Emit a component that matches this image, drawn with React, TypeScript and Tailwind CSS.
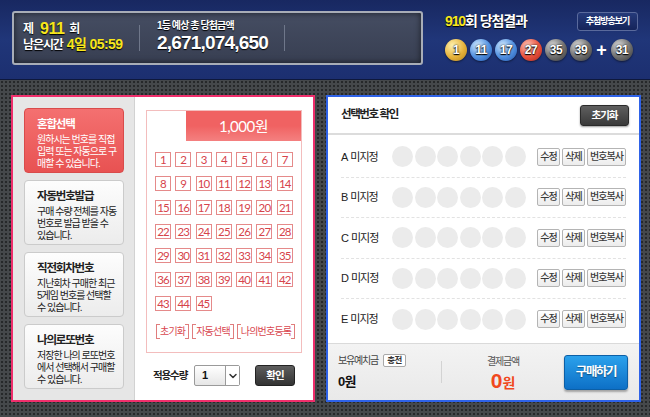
import React from 'react';
import { ChevronDown } from 'lucide-react';

interface Menu {
  title: string;
  lines: string[];
  active?: boolean;
}

const MENUS: Menu[] = [
  { title: '혼합선택', lines: ['원하시는 번호를 직접', '입력 또는 자동으로 구', '매할 수 있습니다.'], active: true },
  { title: '자동번호발급', lines: ['구매 수량 전체를 자동', '번호로 발급 받을 수', '있습니다.'] },
  { title: '직전회차번호', lines: ['지난회차 구매한 최근', '5게임 번호를 선택할', '수 있습니다.'] },
  { title: '나의로또번호', lines: ['저장한 나의 로또번호', '에서 선택해서 구매할', '수 있습니다.'] },
];

const NUMBERS = Array.from({ length: 45 }, (_, i) => i + 1);
const SLOTS = ['A', 'B', 'C', 'D', 'E'];

// winning balls of the last draw
const BALLS = [
  { n: 1, cls: 'bg-[radial-gradient(circle_at_35%_30%,#fff2b0,#e6b23a_55%,#b3821a)]' },
  { n: 11, cls: 'bg-[radial-gradient(circle_at_35%_30%,#cfe8ff,#4f8fe0_55%,#2456a8)]' },
  { n: 17, cls: 'bg-[radial-gradient(circle_at_35%_30%,#cfe8ff,#4f8fe0_55%,#2456a8)]' },
  { n: 27, cls: 'bg-[radial-gradient(circle_at_35%_30%,#ffc2b5,#e8503c_55%,#a8261a)]' },
  { n: 35, cls: 'bg-[radial-gradient(circle_at_35%_30%,#d8d8d8,#6e6e6e_55%,#333)]' },
  { n: 39, cls: 'bg-[radial-gradient(circle_at_35%_30%,#d8d8d8,#6e6e6e_55%,#333)]' },
];
const BONUS = { n: 31, cls: 'bg-[radial-gradient(circle_at_35%_30%,#d8d8d8,#6e6e6e_55%,#333)]' };

const Ball = ({ n, cls }: { n: number; cls: string }) => (
  <div
    className={`w-[22px] h-[22px] rounded-full flex items-center justify-center text-white text-[12px] font-bold tracking-[-0.5px] [text-shadow:0_0_2px_#000,0_1px_1px_#000] shadow-[0_1px_2px_rgba(0,0,0,0.5)] ${cls}`}
  >
    {n}
  </div>
);

const SmallBtn = ({ label, w }: { label: string; w: string }) => (
  <button
    className={`${w} h-[18px] border border-[#b4b4b4] rounded-[2px] bg-gradient-to-b from-white to-[#ececec] text-[10px] text-[#3a3a3a] font-medium tracking-[-1px] leading-none flex items-center justify-center`}
  >
    {label}
  </button>
);

const BracketBtn = ({ label }: { label: string }) => (
  <span className="relative h-[15px] px-[3px] border border-[#e07d7d] text-[10px] text-[#d9474f] tracking-[-0.8px] leading-none flex items-center">
    {label}
    <span className="absolute left-[3px] right-[3px] top-[-1px] h-px bg-white" />
    <span className="absolute left-[3px] right-[3px] bottom-[-1px] h-px bg-white" />
  </span>
);

export default function App() {
  return (
    <div className="w-[650px] h-[417px] overflow-hidden bg-[#45484b] bg-[radial-gradient(circle,#26282a_0.9px,transparent_1.3px)] bg-[length:4px_4px] font-['Liberation_Sans','Noto_Sans_CJK_KR',sans-serif]">
      {/* Header */}
      <div className="h-[80px] flex pl-[12px] pt-[11px] bg-gradient-to-b from-[#182861] via-[#203679] to-[#1c2f70] border-b border-[#0e183c]">
        <div className="w-[411px] h-[54px] rounded-[3px] border-2 border-[#a8adb7] bg-gradient-to-b from-[#454d62] to-[#383f52] shadow-[inset_0_0_6px_rgba(0,0,0,0.6)] flex items-center pl-[9px] [text-shadow:0_1px_1px_#000]">
          <div className="w-[116px] flex flex-col mb-[3px]">
            <div className="h-[16px] flex items-center text-white font-bold">
              <span className="text-[12px]">제</span>
              <span className="text-[16px] text-[#f7e61c] ml-[6px] mr-[5px] tracking-[-0.5px]">911</span>
              <span className="text-[12px]">회</span>
            </div>
            <div className="h-[16px] flex items-center text-white font-bold whitespace-nowrap">
              <span className="text-[12px] tracking-[-1.1px]">남은시간</span>
              <span className="text-[14px] text-[#f7e61c] ml-[4px] tracking-[-0.6px]">4일 05:59</span>
            </div>
          </div>
          <div className="w-px h-[26px] bg-[#6f778a] mr-[17px]" />
          <div className="w-[127px] flex flex-col mb-[3px]">
            <div className="h-[14px] flex items-center text-white text-[10px] font-bold tracking-[-0.9px] whitespace-nowrap">
              1등 예상 총 당첨금액
            </div>
            <div className="h-[22px] flex items-center text-white text-[19px] font-bold tracking-[-0.8px]">
              2,671,074,650
            </div>
          </div>
          <div className="w-px h-[26px] bg-[#6f778a]" />
        </div>

        <div className="ml-[22px] w-[193px] flex flex-col">
          <div className="h-[19px] mt-[1px] flex items-center justify-between">
            <span className="text-[14px] font-bold text-white tracking-[-1.1px] whitespace-nowrap [text-shadow:0_1px_1px_#000]">
              <span className="text-[#f7e61c]">910</span>회 당첨결과
            </span>
            <button className="w-[61px] h-[19px] rounded-[3px] border border-[#5a6a9c] bg-gradient-to-b from-[#253a7a] to-[#15245a] text-white text-[9px] font-bold tracking-[-1px] leading-none">
              추첨방송보기
            </button>
          </div>
          <div className="mt-[8px] flex items-center gap-[3px]">
            {BALLS.map((b) => (
              <Ball key={b.n} n={b.n} cls={b.cls} />
            ))}
            <span className="w-[13px] text-center text-white text-[18px] font-bold leading-none">+</span>
            <Ball n={BONUS.n} cls={BONUS.cls} />
          </div>
        </div>
      </div>

      {/* Body */}
      <div className="flex pl-[11px] pt-[15px] gap-[11px]">
        {/* Left panel */}
        <div className="w-[304px] h-[307px] border-2 border-[#ef2e6c] bg-white flex">
          <div className="w-[122px] h-full bg-[#e6e6e6] border-r border-[#d2d2d2] pl-[11px] pt-[11px] flex flex-col gap-[7px]">
            {MENUS.map((m) => (
              <div
                key={m.title}
                className={
                  m.active
                    ? 'w-[100px] h-[65px] rounded-[4px] border border-[#d94b4b] bg-gradient-to-b from-[#f47070] to-[#e85252] pl-[12px] pt-[7px] text-white'
                    : 'w-[100px] h-[65px] rounded-[4px] border border-[#cbcbcb] bg-gradient-to-b from-[#fdfdfd] to-[#ececec] pl-[12px] pt-[7px] text-[#222]'
                }
              >
                <div className="h-[16px] text-[11.5px] font-bold tracking-[-1.2px] leading-[16px] whitespace-nowrap">{m.title}</div>
                <div className="mt-[2px]">
                  {m.lines.map((l) => (
                    <div key={l} className="h-[12px] text-[10px] leading-[12px] tracking-[-1px] whitespace-nowrap">
                      {l}
                    </div>
                  ))}
                </div>
              </div>
            ))}
          </div>

          <div className="flex-1 pl-[11px] pt-[13px]">
            <div className="w-[156px] h-[243px] border border-[#f3bdbd] flex flex-col">
              <div className="h-[30px] flex">
                <div className="w-[39px] bg-white" />
                <div className="flex-1 bg-gradient-to-b from-[#f06262] via-[#f06262] to-[#f48080] flex items-center justify-center text-white text-[15px] font-['Lato','Noto_Sans_CJK_KR',sans-serif] tracking-[-0.5px]">
                  1,000원
                </div>
              </div>
              <div className="pl-[8px] pt-[11px] grid grid-cols-[repeat(7,16px)] gap-x-[4.3px] gap-y-[9px]">
                {NUMBERS.map((n) => (
                  <div
                    key={n}
                    className="w-[16px] h-[15px] border border-[#e58a8a] flex items-center justify-center text-[11.5px] text-[#d6434b] tracking-[-0.8px] font-['Lato',sans-serif] leading-none"
                  >
                    {n}
                  </div>
                ))}
              </div>
              <div className="mt-[13px] pl-[9px] flex gap-[3px]">
                <BracketBtn label="초기화" />
                <BracketBtn label="자동선택" />
                <BracketBtn label="나의번호등록" />
              </div>
            </div>

            <div className="mt-[12px] flex items-center">
              <span className="w-[48px] pl-[7px] text-[10.5px] text-[#222] font-bold tracking-[-1.1px] whitespace-nowrap">적용수량</span>
              <div className="w-[46px] h-[21px] border border-[#9a9a9a] rounded-[2px] bg-gradient-to-b from-white to-[#e6e6e6] flex">
                <span className="flex-1 pl-[7px] flex items-center text-[11px] font-bold text-[#111]">1</span>
                <span className="w-[14px] border-l border-[#9a9a9a] bg-white flex items-center justify-center">
                  <ChevronDown size={12} strokeWidth={3} className="text-[#333]" />
                </span>
              </div>
              <button className="ml-[15px] w-[40px] h-[21px] rounded-[3px] border border-[#222] bg-gradient-to-b from-[#5e5e5e] to-[#333] text-white text-[10.5px] font-bold tracking-[-1px] leading-none">
                확인
              </button>
            </div>
          </div>
        </div>

        {/* Right panel */}
        <div className="w-[315px] h-[307px] border-2 border-[#2e62e8] bg-white flex flex-col">
          <div className="h-[38px] flex items-center justify-between pl-[13px] pr-[10px] border-b-2 border-[#dcdcdc]">
            <span className="text-[11.5px] font-bold text-[#222] tracking-[-1.4px]">선택번호 확인</span>
            <button className="w-[49px] h-[21px] rounded-[3px] border border-[#2a2a2a] bg-gradient-to-b from-[#5f5f5f] to-[#3a3a3a] shadow-[0_1px_2px_rgba(0,0,0,0.4)] text-white text-[10.5px] font-bold tracking-[-1px] leading-none">
              초기화
            </button>
          </div>

          <div className="pt-[2px] px-[13px] flex flex-col">
            {SLOTS.map((s, i) => (
              <div
                key={s}
                className={
                  i < SLOTS.length - 1
                    ? 'h-[40.5px] flex items-center border-b border-dashed border-[#e2e2e2]'
                    : 'h-[40.5px] flex items-center'
                }
              >
                <span className="w-[51px] flex items-center text-[11px] text-[#222] whitespace-nowrap">
                  <span>{s}</span>
                  <span className="ml-[2px] tracking-[-1px]">미지정</span>
                </span>
                <div className="flex gap-[1.6px]">
                  {[0, 1, 2, 3, 4, 5].map((k) => (
                    <div key={k} className="w-[21px] h-[21px] rounded-full bg-[#ebebeb]" />
                  ))}
                </div>
                <div className="ml-auto flex gap-[2px]">
                  <SmallBtn label="수정" w="w-[23px]" />
                  <SmallBtn label="삭제" w="w-[23px]" />
                  <SmallBtn label="번호복사" w="w-[39px]" />
                </div>
              </div>
            ))}
          </div>

          <div className="mt-auto h-[57px] border-t border-[#dadada] bg-gradient-to-b from-[#f3f3f3] to-[#e9e9e9] flex items-center pl-[10px] pr-[11px]">
            <div className="w-[103px] flex flex-col gap-[4px]">
              <div className="flex items-center gap-[5px]">
                <span className="text-[10px] text-[#444] tracking-[-1.2px] whitespace-nowrap">보유예치금</span>
                <span className="w-[23px] h-[13px] border border-[#a8a8a8] rounded-[2px] bg-white text-[8.5px] font-bold text-[#333] flex items-center justify-center leading-none tracking-[-0.5px]">
                  충전
                </span>
              </div>
              <span className="text-[13px] font-bold text-[#111] tracking-[-0.8px]">0원</span>
            </div>
            <div className="w-px h-[22px] bg-[#d3d3d3]" />
            <div className="flex-1 flex flex-col items-center gap-[1px]">
              <span className="text-[10px] text-[#555] tracking-[-1.2px]">결제금액</span>
              <span className="flex items-baseline text-[#f0481d] font-bold leading-none">
                <span className="text-[21px]">0</span>
                <span className="text-[14px]">원</span>
              </span>
            </div>
            <button className="w-[64px] h-[35px] rounded-[3px] border border-[#0c5fa6] bg-gradient-to-b from-[#2ba1ec] to-[#0d70c6] shadow-[0_2px_2px_rgba(0,0,0,0.3)] text-white text-[12.5px] font-bold tracking-[-1.4px] leading-none [text-shadow:0_1px_1px_rgba(0,0,0,0.4)]">
              구매하기
            </button>
          </div>
        </div>
      </div>
    </div>
  );
}
